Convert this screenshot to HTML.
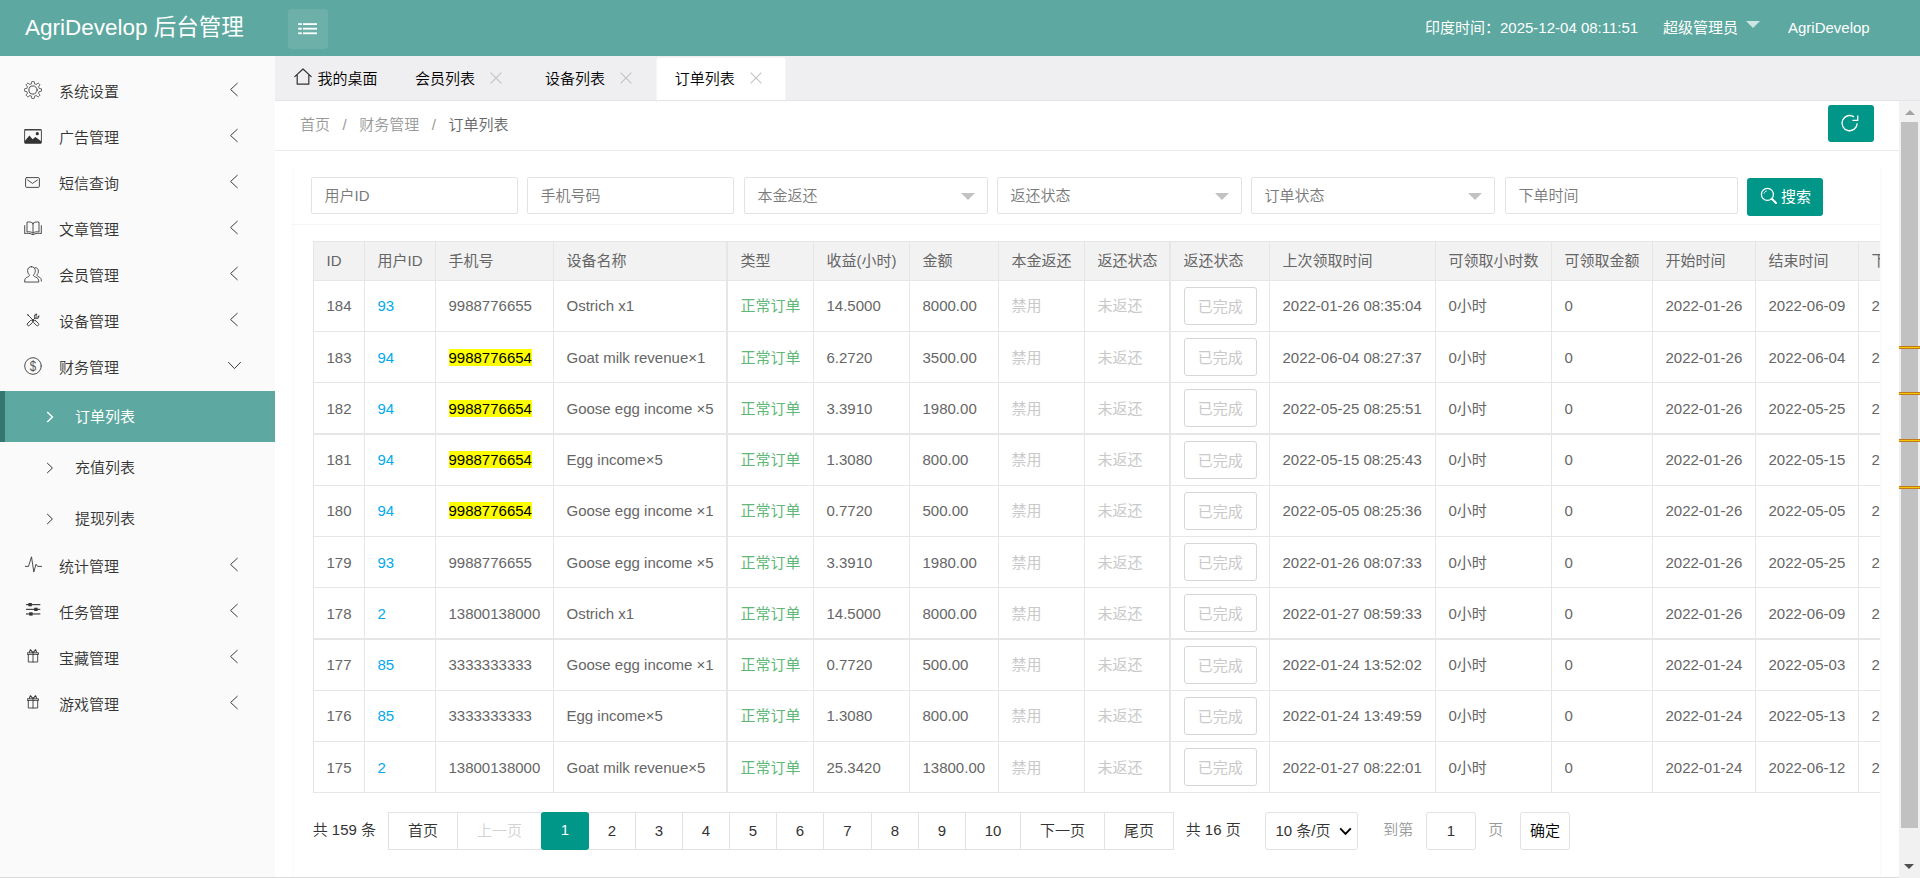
<!DOCTYPE html>
<html lang="zh-CN">
<head>
<meta charset="utf-8">
<title>AgriDevelop 后台管理</title>
<style>
*{box-sizing:border-box;margin:0;padding:0}
html,body{width:1920px;height:878px;overflow:hidden;background:#fff}
body{position:relative;font-family:"Liberation Sans","Noto Sans CJK SC",sans-serif;font-size:15px;color:#333;line-height:1;font-weight:350}
a{text-decoration:none;color:inherit}
ul{list-style:none}
/* ---------- header ---------- */
#hd{font-weight:400;position:absolute;left:0;top:0;width:1920px;height:56px;background:#5da8a0;color:#fff}
#hd .logo{font-weight:400;position:absolute;left:25px;top:0;height:56px;line-height:55px;font-size:22.5px;white-space:nowrap}
#hd .ham{position:absolute;left:288px;top:9px;width:40px;height:40px;border-radius:4px;background:rgba(255,255,255,.1)}
#hd .ham svg{position:absolute;left:0;top:0}
#hd .rt{position:absolute;top:0;height:56px;line-height:55px;font-size:15px;white-space:nowrap}
#hd .tri{position:absolute;left:1746px;top:21px;width:0;height:0;border:7px solid transparent;border-top:7.5px solid rgba(255,255,255,.7);border-bottom:0}
/* ---------- sidebar ---------- */
#sb{position:absolute;left:0;top:56px;width:275px;height:822px;background:#fafafa;padding-top:12px}
#sb .mi{position:relative;height:46px;display:block}
#sb .mi svg{position:absolute}
#sb .mi cite{position:absolute;left:59px;top:0;line-height:48px;font-style:normal;font-size:15px;color:#333;white-space:nowrap}
#sb .mi .ar{position:absolute;left:229px;top:14px}
#sb .sub li{position:relative;height:51px}
#sb .sub li cite{position:absolute;left:75px;top:0;line-height:52px;font-style:normal;font-size:15px;color:#333;white-space:nowrap}
#sb .sub li svg{position:absolute;left:46px;top:20px}
#sb .sub li.on{background:#5da8a0;border-left:5px solid #35776f}
#sb .sub li.on cite{left:70px;color:#fff;font-weight:400}
#sb .sub li.on svg{left:41px}
#sb .sub{padding-top:1px}
#sb .sub li:last-child{height:50px}
/* ---------- tabs ---------- */
#tabs{position:absolute;left:275px;top:56px;width:1645px;height:45px;background:#efeef0;border-bottom:1px solid #e4e4e6;z-index:3}
#tabs li{position:absolute;top:0;height:44px;line-height:46px;font-size:15px;color:#000;white-space:nowrap}
#tabs li.on{background:#fff;top:1px;height:43px;line-height:42px;border:1px solid #f5f5f6;border-bottom:0;border-radius:3px 3px 0 0}
#tabs li.on:after{content:"";position:absolute;left:-1px;right:-1px;bottom:-2px;height:2px;border-left:1px solid #eee;border-right:1px solid #eee}
#tabs svg{position:absolute}
/* ---------- page ---------- */
#pg{position:absolute;left:275px;top:100px;width:1624px;height:778px;background:#fff;overflow:hidden}
#xnav{position:absolute;left:0;top:0;width:1624px;height:51px;border-bottom:1px solid #e9e9e9;line-height:49px;padding-left:25px;font-size:15px;color:#999;white-space:nowrap}
#xnav span{display:inline-block}
#xnav .sep{margin:0 12.5px}
#xnav .cur{color:#666}
#xnav .rf{position:absolute;left:1553px;top:5px;width:46px;height:37px;border-radius:3px;background:#009688}
#card{position:absolute;left:19px;top:67px;width:1586px;height:761px;border-radius:2.5px;box-shadow:0 1px 3px 0 rgba(0,0,0,.06)}
#sf{position:absolute;left:0;top:1px;width:1586px;height:57px;border-bottom:1px solid #f6f6f6}
#sf:before{content:"";position:absolute;left:-3px;bottom:-1px;width:3px;height:1px;background:#f6f6f6}
.inp{position:absolute;top:9px;height:37px;border:1px solid #e3e3e3;border-radius:2px;background:#fff;line-height:35px;padding-left:12.5px;font-size:15px;color:#7a7a7a;white-space:nowrap}
.inp i{position:absolute;right:12px;top:15px;width:0;height:0;border:7.5px solid transparent;border-top-color:#c2c2c2;border-bottom:0}
#sbtn{font-weight:400;position:absolute;left:1453px;top:10px;width:76px;height:38px;border-radius:3px;background:#009688;color:#fff;font-size:15px;line-height:37px;white-space:nowrap}
#sbtn svg{position:absolute;left:13px;top:9.2px}
#sbtn span{position:absolute;left:34px;top:0}
/* ---------- table ---------- */
#tw{position:absolute;left:19px;top:74px;width:1567px;height:560px;overflow:hidden}
table{border-collapse:separate;border-spacing:0;table-layout:fixed;width:1680px;border-top:1px solid #e6e6e6;border-left:1px solid #e6e6e6;font-size:15px;color:#666}
th,td{border-right:1px solid #e6e6e6;border-bottom:1px solid #e6e6e6;padding:0 0 2px 12.5px;text-align:left;font-weight:normal;white-space:nowrap;overflow:hidden;vertical-align:middle}
th{height:39px;background:#f2f2f2}
td{height:51px}
tr.h52 td{height:52px;border-bottom-width:2px}
tr.lo td{padding-bottom:0}
tr.lo .btn{top:0}
th:nth-child(4),td:nth-child(4),th:nth-child(9),td:nth-child(9){border-right-width:2px}
td a{color:#01aaed}
.g{color:#5fb878}
.d{color:#c9c9c9}
mark{background:#ff0;color:#000;display:inline-block;line-height:17px;height:17px}
.btn{position:relative;top:1px;display:inline-block;width:73.5px;height:37.5px;line-height:37.5px;border:1px solid #d6d6d6;border-radius:3px;color:#c9c9c9;text-align:center;vertical-align:middle;background:#fff}
/* ---------- pager ---------- */
#pgr{position:absolute;left:0;top:712px;height:38px;width:1624px;font-size:15px;color:#333;white-space:nowrap}
#pgr>*{position:absolute;top:0;height:38px;line-height:35px;text-align:center}
#pgr .b{border:1px solid #e2e2e2;background:#fff}
#pgr .cur{background:#009688;color:#fff;border-radius:3px}
#pgr .dis{color:#d2d2d2}
#pgr .gr{color:#999}
/* ---------- scrollbar ---------- */
#sc{position:absolute;left:1899px;top:100px;width:21px;height:778px;background:#f1f1f1}
#sc .th{position:absolute;left:2px;top:22px;width:17px;height:706px;background:#c1c1c1}
#sc .up{position:absolute;left:5.5px;top:10px;width:0;height:0;border:5.5px solid transparent;border-bottom:5.5px solid #a3a3a3;border-top:0}
#sc .dn{position:absolute;left:5px;top:764px;width:0;height:0;border:5.5px solid transparent;border-top:5.5px solid #505050;border-bottom:0}
#sc .mk{position:absolute;left:0;width:21px;height:3px;background:#f2c800;border-top:1px solid #c07a1c;border-bottom:1px solid #c07a1c}
#bl{position:absolute;left:0;top:877px;width:1899px;height:1px;background:#d9dbdd}
</style>
</head>
<body>
<div id="hd">
  <div class="logo">AgriDevelop 后台管理</div>
  <div class="ham"><svg width="40" height="40" viewBox="0 0 40 40"><g fill="#fff"><rect x="10.2" y="14.2" width="3.6" height="1.8"/><rect x="15" y="14.2" width="14" height="1.8"/><rect x="10.2" y="18.8" width="3.6" height="1.8"/><rect x="15" y="18.8" width="14" height="1.8"/><rect x="10.2" y="23.4" width="3.6" height="1.8"/><rect x="15" y="23.4" width="14" height="1.8"/></g></svg></div>
  <div class="rt" style="left:1425px">印度时间：2025-12-04 08:11:51</div>
  <div class="rt" style="left:1663px">超级管理员</div>
  <div class="tri"></div>
  <div class="rt" style="left:1788px">AgriDevelop</div>
</div>

<div id="sb">
<ul id="nav">
<li><a class="mi"><svg style="left:24px;top:13px" width="18" height="18" viewBox="0 0 18 18"><path d="M17.65 9.00 L17.64 9.34 L17.62 9.68 L17.59 10.02 L17.05 10.28 L16.31 10.45 L15.56 10.57 L15.02 10.70 L14.94 10.93 L14.86 11.16 L14.77 11.39 L14.68 11.62 L14.57 11.84 L14.45 12.05 L14.75 12.52 L15.19 13.14 L15.60 13.79 L15.79 14.36 L15.58 14.62 L15.35 14.87 L15.12 15.12 L14.87 15.35 L14.62 15.58 L14.36 15.79 L13.79 15.60 L13.14 15.19 L12.52 14.75 L12.05 14.45 L11.84 14.57 L11.62 14.68 L11.39 14.77 L11.16 14.86 L10.93 14.94 L10.70 15.02 L10.57 15.56 L10.45 16.31 L10.28 17.05 L10.02 17.59 L9.68 17.62 L9.34 17.64 L9.00 17.65 L8.66 17.64 L8.32 17.62 L7.98 17.59 L7.72 17.05 L7.55 16.31 L7.43 15.56 L7.30 15.02 L7.07 14.94 L6.84 14.86 L6.61 14.77 L6.38 14.68 L6.16 14.57 L5.95 14.45 L5.48 14.75 L4.86 15.19 L4.21 15.60 L3.64 15.79 L3.38 15.58 L3.13 15.35 L2.88 15.12 L2.65 14.87 L2.42 14.62 L2.21 14.36 L2.40 13.79 L2.81 13.14 L3.25 12.52 L3.55 12.05 L3.43 11.84 L3.32 11.62 L3.23 11.39 L3.14 11.16 L3.06 10.93 L2.98 10.70 L2.44 10.57 L1.69 10.45 L0.95 10.28 L0.41 10.02 L0.38 9.68 L0.36 9.34 L0.35 9.00 L0.36 8.66 L0.38 8.32 L0.41 7.98 L0.95 7.72 L1.69 7.55 L2.44 7.43 L2.98 7.30 L3.06 7.07 L3.14 6.84 L3.23 6.61 L3.32 6.38 L3.43 6.16 L3.55 5.95 L3.25 5.48 L2.81 4.86 L2.40 4.21 L2.21 3.64 L2.42 3.38 L2.65 3.13 L2.88 2.88 L3.13 2.65 L3.38 2.42 L3.64 2.21 L4.21 2.40 L4.86 2.81 L5.48 3.25 L5.95 3.55 L6.16 3.43 L6.38 3.32 L6.61 3.23 L6.84 3.14 L7.07 3.06 L7.30 2.98 L7.43 2.44 L7.55 1.69 L7.72 0.95 L7.98 0.41 L8.32 0.38 L8.66 0.36 L9.00 0.35 L9.34 0.36 L9.68 0.38 L10.02 0.41 L10.28 0.95 L10.45 1.69 L10.57 2.44 L10.70 2.98 L10.93 3.06 L11.16 3.14 L11.39 3.23 L11.62 3.32 L11.84 3.43 L12.05 3.55 L12.52 3.25 L13.14 2.81 L13.79 2.40 L14.36 2.21 L14.62 2.42 L14.87 2.65 L15.12 2.88 L15.35 3.13 L15.58 3.38 L15.79 3.64 L15.60 4.21 L15.19 4.86 L14.75 5.48 L14.45 5.95 L14.57 6.16 L14.68 6.38 L14.77 6.61 L14.86 6.84 L14.94 7.07 L15.02 7.30 L15.56 7.43 L16.31 7.55 L17.05 7.72 L17.59 7.98 L17.62 8.32 L17.64 8.66Z" stroke="#3a3a3a" stroke-width="0.9" fill="none" stroke-linejoin="round" stroke-linecap="round"/><circle cx="9" cy="9" r="4.1" stroke="#3a3a3a" stroke-width="0.9" fill="none" stroke-linejoin="round" stroke-linecap="round"/></svg><cite>系统设置</cite><svg class="ar" width="10" height="15" viewBox="0 0 10 15"><path d="M8.6 1 L1.6 7.5 L8.6 14" stroke="#333" stroke-width="0.95" fill="none"/></svg></a></li>
<li><a class="mi"><svg style="left:24px;top:15px" width="18" height="15" viewBox="0 0 18 15"><rect x="0.6" y="0.7" width="16.8" height="13.6" rx="0.6" stroke="#3a3a3a" stroke-width="0.9" fill="none" stroke-linejoin="round" stroke-linecap="round"/><path d="M0.6 0.8 L17.4 0.8" stroke="#333" stroke-width="1.1"/><path d="M0.8 12 L5.4 6.6 L8.6 10.2 L11.4 8 L17.2 12.2 L17.2 14.3 L0.8 14.3Z" fill="#333"/><circle cx="13.3" cy="4.7" r="1.6" fill="#333"/></svg><cite>广告管理</cite><svg class="ar" width="10" height="15" viewBox="0 0 10 15"><path d="M8.6 1 L1.6 7.5 L8.6 14" stroke="#333" stroke-width="0.95" fill="none"/></svg></a></li>
<li><a class="mi"><svg style="left:25.4px;top:17px" width="15" height="11" viewBox="0 0 15 11"><rect x="0.6" y="0.6" width="13.8" height="9.8" rx="1.2" stroke="#3a3a3a" stroke-width="0.9" fill="none" stroke-linejoin="round" stroke-linecap="round"/><path d="M2.6 3 L7.5 6.4 L12.4 3" stroke="#3a3a3a" stroke-width="0.9" fill="none" stroke-linejoin="round" stroke-linecap="round"/></svg><cite>短信查询</cite><svg class="ar" width="10" height="15" viewBox="0 0 10 15"><path d="M8.6 1 L1.6 7.5 L8.6 14" stroke="#333" stroke-width="0.95" fill="none"/></svg></a></li>
<li><a class="mi"><svg style="left:24.3px;top:15px" width="18" height="15" viewBox="0 0 18 15"><path d="M9 2.4 C7.6 0.9 5 0.7 3 1.2 L3 11 C5 10.5 7.6 10.8 9 12.2 C10.4 10.8 13 10.5 15 11 L15 1.2 C13 0.7 10.4 0.9 9 2.4Z M9 2.4 L9 12.2" stroke="#3a3a3a" stroke-width="0.9" fill="none" stroke-linejoin="round" stroke-linecap="round"/><path d="M0.7 4.6 L0.7 12.6 C3 12 6.6 12.2 9 13.8 C11.4 12.2 15 12 17.3 12.6 L17.3 4.6" stroke="#3a3a3a" stroke-width="0.9" fill="none" stroke-linejoin="round" stroke-linecap="round"/></svg><cite>文章管理</cite><svg class="ar" width="10" height="15" viewBox="0 0 10 15"><path d="M8.6 1 L1.6 7.5 L8.6 14" stroke="#333" stroke-width="0.95" fill="none"/></svg></a></li>
<li><a class="mi"><svg style="left:24px;top:14px" width="18" height="17" viewBox="0 0 18 18" preserveAspectRatio="none"><path d="M7.4 0.7 C9.8 0.7 11.3 2.6 11.3 5 C11.3 7 10.5 8.6 9.4 9.5 C9.4 10.6 10 11 11.6 11.7 C13.6 12.6 14.8 13.6 14.8 17 L0.6 17 C0.6 13.6 1.4 12.6 3.4 11.7 C5 11 5.5 10.6 5.5 9.5 C4.4 8.6 3.6 7 3.6 5 C3.6 2.6 5 0.7 7.4 0.7Z" stroke="#3a3a3a" stroke-width="0.9" fill="none" stroke-linejoin="round" stroke-linecap="round"/><path d="M11.2 1.6 C13.2 1.8 14.4 3.4 14.4 5.4 C14.4 7.2 13.8 8.6 12.9 9.4 C12.9 10.4 13.4 10.8 14.6 11.4 C16.4 12.2 17.4 13.2 17.4 16" stroke="#3a3a3a" stroke-width="0.9" fill="none" stroke-linejoin="round" stroke-linecap="round"/></svg><cite>会员管理</cite><svg class="ar" width="10" height="15" viewBox="0 0 10 15"><path d="M8.6 1 L1.6 7.5 L8.6 14" stroke="#333" stroke-width="0.95" fill="none"/></svg></a></li>
<li><a class="mi"><svg style="left:26px;top:15px" width="14" height="14" viewBox="0 0 14 14"><g transform="rotate(45 7 7)"><rect x="-1" y="6.35" width="1.8" height="1.3" fill="#333"/><path d="M0.6 7 L8 7" stroke="#3a3a3a" stroke-width="0.9" fill="none" stroke-linejoin="round" stroke-linecap="round"/><rect x="8" y="5.6" width="6.6" height="2.8" rx="1.4" stroke="#3a3a3a" stroke-width="0.9" fill="none" stroke-linejoin="round" stroke-linecap="round"/></g><g transform="rotate(-45 7 7)"><rect x="-0.6" y="5.6" width="6.6" height="2.8" rx="1.4" stroke="#3a3a3a" stroke-width="0.9" fill="none" stroke-linejoin="round" stroke-linecap="round"/><path d="M6 7 L9.9 7" stroke="#3a3a3a" stroke-width="0.9" fill="none" stroke-linejoin="round" stroke-linecap="round"/><path d="M14.01 8.42 A2.3 2.3 0 1 1 14.01 5.58 L11.6 6.2 L11.6 7.8 Z" stroke="#3a3a3a" stroke-width="0.9" fill="none" stroke-linejoin="round" stroke-linecap="round"/></g></svg><cite>设备管理</cite><svg class="ar" width="10" height="15" viewBox="0 0 10 15"><path d="M8.6 1 L1.6 7.5 L8.6 14" stroke="#333" stroke-width="0.95" fill="none"/></svg></a></li>
<li><a class="mi"><svg style="left:24px;top:13.4px" width="18" height="18" viewBox="0 0 18 18"><circle cx="9" cy="9" r="8.3" stroke="#3a3a3a" stroke-width="0.9" fill="none" stroke-linejoin="round" stroke-linecap="round"/><text x="9.1" y="13.9" text-anchor="middle" font-family="Liberation Sans,sans-serif" font-size="14" fill="#555" transform="translate(1.55 0) scale(0.83 1)">$</text></svg><cite>财务管理</cite><svg class="ar" style="left:227px;top:16.5px" width="15" height="10" viewBox="0 0 15 10"><path d="M1.2 1 L7.5 7.6 L13.8 1" stroke="#333" stroke-width="0.95" fill="none"/></svg></a>
<ul class="sub"><li class="on"><svg width="8" height="12" viewBox="0 0 8 12"><path d="M1.2 1 L6.4 6 L1.2 11" stroke="#fff" stroke-width="1.5" fill="none"/></svg><cite>订单列表</cite></li><li><svg width="8" height="12" viewBox="0 0 8 12"><path d="M1.2 1 L6.4 6 L1.2 11" stroke="#333" stroke-width="1" fill="none"/></svg><cite>充值列表</cite></li><li><svg width="8" height="12" viewBox="0 0 8 12"><path d="M1.2 1 L6.4 6 L1.2 11" stroke="#333" stroke-width="1" fill="none"/></svg><cite>提现列表</cite></li></ul></li>
<li><a class="mi"><svg style="left:24.5px;top:12.5px" width="17" height="17" viewBox="0 0 17 17"><path d="M0.3 10.4 L3.5 10.4 L6.5 0.8 L8.8 16 L11 8.2 L12.6 10.4 L16.6 10.4" stroke="#3a3a3a" stroke-width="0.9" fill="none" stroke-linejoin="round" stroke-linecap="round"/></svg><cite>统计管理</cite><svg class="ar" width="10" height="15" viewBox="0 0 10 15"><path d="M8.6 1 L1.6 7.5 L8.6 14" stroke="#333" stroke-width="0.95" fill="none"/></svg></a></li>
<li><a class="mi"><svg style="left:25.8px;top:14px" width="15" height="14" viewBox="0 0 15 14"><g fill="#333"><rect x="0" y="1.1" width="14.3" height="1.1"/><rect x="2.4" y="0" width="3.4" height="3.3"/><rect x="0" y="5.8" width="14.3" height="1.1"/><rect x="8.2" y="4.7" width="3.4" height="3.3"/><rect x="0" y="10.4" width="14.3" height="1.1"/><rect x="3.2" y="9.3" width="3.4" height="3.3"/></g></svg><cite>任务管理</cite><svg class="ar" width="10" height="15" viewBox="0 0 10 15"><path d="M8.6 1 L1.6 7.5 L8.6 14" stroke="#333" stroke-width="0.95" fill="none"/></svg></a></li>
<li><a class="mi"><svg style="left:26.8px;top:13.6px" width="12" height="14" viewBox="0 0 12 14"><path d="M1.3 5.4 L1.3 13 L10.7 13 L10.7 5.4 M0.5 3.8 L11.5 3.8 L11.5 5.4 L0.5 5.4Z M6 3.8 L6 13" stroke="#3a3a3a" stroke-width="0.9" fill="none" stroke-linejoin="round" stroke-linecap="round"/><path d="M6 3.6 L3.4 0.7 L2.2 3.6 M6 3.6 L8.6 0.7 L9.8 3.6" stroke="#333" stroke-width="1.05" fill="none" stroke-linejoin="round"/></svg><cite>宝藏管理</cite><svg class="ar" width="10" height="15" viewBox="0 0 10 15"><path d="M8.6 1 L1.6 7.5 L8.6 14" stroke="#333" stroke-width="0.95" fill="none"/></svg></a></li>
<li><a class="mi"><svg style="left:26.8px;top:13.6px" width="12" height="14" viewBox="0 0 12 14"><path d="M1.3 5.4 L1.3 13 L10.7 13 L10.7 5.4 M0.5 3.8 L11.5 3.8 L11.5 5.4 L0.5 5.4Z M6 3.8 L6 13" stroke="#3a3a3a" stroke-width="0.9" fill="none" stroke-linejoin="round" stroke-linecap="round"/><path d="M6 3.6 L3.4 0.7 L2.2 3.6 M6 3.6 L8.6 0.7 L9.8 3.6" stroke="#333" stroke-width="1.05" fill="none" stroke-linejoin="round"/></svg><cite>游戏管理</cite><svg class="ar" width="10" height="15" viewBox="0 0 10 15"><path d="M8.6 1 L1.6 7.5 L8.6 14" stroke="#333" stroke-width="0.95" fill="none"/></svg></a></li>
</ul>
</div>

<ul id="tabs">
<li style="left:0;width:121px;padding-left:42.5px"><svg style="left:19px;top:12px" width="18" height="18" viewBox="0 0 18 18"><path d="M0.8 8.6 L9 1 L17.2 8.6 M3.2 7 L3.2 16.2 L14.8 16.2 L14.8 7" stroke="#333" stroke-width="1.2" fill="none" stroke-linejoin="round" stroke-linecap="round"/></svg>我的桌面</li>
<li style="left:121.25px;width:130px;padding-left:18.75px">会员列表<svg style="left:94px;top:16px" width="12" height="12" viewBox="0 0 12 12"><path d="M0.6 0.6 L11.4 11.4 M11.4 0.6 L0.6 11.4" stroke="#c2c2c2" stroke-width="1.1" fill="none"/></svg></li>
<li style="left:251.25px;width:130px;padding-left:18.75px">设备列表<svg style="left:94px;top:16px" width="12" height="12" viewBox="0 0 12 12"><path d="M0.6 0.6 L11.4 11.4 M11.4 0.6 L0.6 11.4" stroke="#c2c2c2" stroke-width="1.1" fill="none"/></svg></li>
<li class="on" style="left:381px;width:130px;padding-left:17.75px">订单列表<svg style="left:93px;top:14px" width="12" height="12" viewBox="0 0 12 12"><path d="M0.6 0.6 L11.4 11.4 M11.4 0.6 L0.6 11.4" stroke="#c2c2c2" stroke-width="1.1" fill="none"/></svg></li>
</ul>

<div id="pg">
  <div id="xnav"><span>首页</span><span class="sep">/</span><span>财务管理</span><span class="sep">/</span><span class="cur">订单列表</span>
    <a class="rf"><svg width="46" height="37" viewBox="0 0 46 37"><path d="M29.2 18.4 A7.6 7.6 0 1 1 26 11.9" stroke="#fff" stroke-width="1.35" fill="none"/><path d="M29.7 10.6 L29.7 15.4 L24.4 15.4" stroke="#fff" stroke-width="1.35" fill="none"/></svg></a>
  </div>
  <div id="card">
    <div id="sf">
<div class="inp" style="left:17px;width:206.5px">用户ID</div>
<div class="inp" style="left:233px;width:206.5px">手机号码</div>
<div class="inp" style="left:450px;width:243.5px">本金返还<i></i></div>
<div class="inp" style="left:703px;width:244.5px">返还状态<i></i></div>
<div class="inp" style="left:957px;width:243.5px">订单状态<i></i></div>
<div class="inp" style="left:1211px;width:232.5px">下单时间</div>
<a id="sbtn"><svg width="18" height="18" viewBox="0 0 18 18"><circle cx="7.4" cy="7.4" r="6" stroke="#fff" stroke-width="1.3" fill="none"/><path d="M11.8 11.8 L16 16" stroke="#fff" stroke-width="2" stroke-linecap="round"/><path d="M4 6.6 C4.4 5 5.4 4.2 6.8 4" stroke="#fff" stroke-width="0.9" fill="none"/></svg><span>搜索</span></a>
</div>
<div id="tw">
<table style="width:1712px"><colgroup><col style="width:51px"><col style="width:71px"><col style="width:118px"><col style="width:174px"><col style="width:86px"><col style="width:96px"><col style="width:89px"><col style="width:86px"><col style="width:86px"><col style="width:99px"><col style="width:166px"><col style="width:116px"><col style="width:101px"><col style="width:103px"><col style="width:103px"><col style="width:166px"></colgroup>
<thead><tr><th>ID</th><th>用户ID</th><th>手机号</th><th>设备名称</th><th>类型</th><th>收益(小时)</th><th>金额</th><th>本金返还</th><th>返还状态</th><th>返还状态</th><th>上次领取时间</th><th>可领取小时数</th><th>可领取金额</th><th>开始时间</th><th>结束时间</th><th>下单时间</th></tr></thead>
<tbody>
<tr><td>184</td><td><a>93</a></td><td>9988776655</td><td>Ostrich x1</td><td class="g">正常订单</td><td>14.5000</td><td>8000.00</td><td class="d">禁用</td><td class="d">未返还</td><td><span class="btn">已完成</span></td><td>2022-01-26 08:35:04</td><td>0小时</td><td>0</td><td>2022-01-26</td><td>2022-06-09</td><td>2022-01-26 08:35:04</td></tr>
<tr class="lo"><td>183</td><td><a>94</a></td><td><mark>9988776654</mark></td><td>Goat milk revenue×1</td><td class="g">正常订单</td><td>6.2720</td><td>3500.00</td><td class="d">禁用</td><td class="d">未返还</td><td><span class="btn">已完成</span></td><td>2022-06-04 08:27:37</td><td>0小时</td><td>0</td><td>2022-01-26</td><td>2022-06-04</td><td>2022-01-26 08:27:37</td></tr>
<tr class="h52 lo"><td>182</td><td><a>94</a></td><td><mark>9988776654</mark></td><td>Goose egg income ×5</td><td class="g">正常订单</td><td>3.3910</td><td>1980.00</td><td class="d">禁用</td><td class="d">未返还</td><td><span class="btn">已完成</span></td><td>2022-05-25 08:25:51</td><td>0小时</td><td>0</td><td>2022-01-26</td><td>2022-05-25</td><td>2022-01-26 08:25:51</td></tr>
<tr><td>181</td><td><a>94</a></td><td><mark>9988776654</mark></td><td>Egg income×5</td><td class="g">正常订单</td><td>1.3080</td><td>800.00</td><td class="d">禁用</td><td class="d">未返还</td><td><span class="btn">已完成</span></td><td>2022-05-15 08:25:43</td><td>0小时</td><td>0</td><td>2022-01-26</td><td>2022-05-15</td><td>2022-01-26 08:25:43</td></tr>
<tr><td>180</td><td><a>94</a></td><td><mark>9988776654</mark></td><td>Goose egg income ×1</td><td class="g">正常订单</td><td>0.7720</td><td>500.00</td><td class="d">禁用</td><td class="d">未返还</td><td><span class="btn">已完成</span></td><td>2022-05-05 08:25:36</td><td>0小时</td><td>0</td><td>2022-01-26</td><td>2022-05-05</td><td>2022-01-26 08:25:36</td></tr>
<tr class="lo"><td>179</td><td><a>93</a></td><td>9988776655</td><td>Goose egg income ×5</td><td class="g">正常订单</td><td>3.3910</td><td>1980.00</td><td class="d">禁用</td><td class="d">未返还</td><td><span class="btn">已完成</span></td><td>2022-01-26 08:07:33</td><td>0小时</td><td>0</td><td>2022-01-26</td><td>2022-05-25</td><td>2022-01-26 08:07:33</td></tr>
<tr class="h52 lo"><td>178</td><td><a>2</a></td><td>13800138000</td><td>Ostrich x1</td><td class="g">正常订单</td><td>14.5000</td><td>8000.00</td><td class="d">禁用</td><td class="d">未返还</td><td><span class="btn">已完成</span></td><td>2022-01-27 08:59:33</td><td>0小时</td><td>0</td><td>2022-01-26</td><td>2022-06-09</td><td>2022-01-26 08:59:33</td></tr>
<tr><td>177</td><td><a>85</a></td><td>3333333333</td><td>Goose egg income ×1</td><td class="g">正常订单</td><td>0.7720</td><td>500.00</td><td class="d">禁用</td><td class="d">未返还</td><td><span class="btn">已完成</span></td><td>2022-01-24 13:52:02</td><td>0小时</td><td>0</td><td>2022-01-24</td><td>2022-05-03</td><td>2022-01-24 13:52:02</td></tr>
<tr><td>176</td><td><a>85</a></td><td>3333333333</td><td>Egg income×5</td><td class="g">正常订单</td><td>1.3080</td><td>800.00</td><td class="d">禁用</td><td class="d">未返还</td><td><span class="btn">已完成</span></td><td>2022-01-24 13:49:59</td><td>0小时</td><td>0</td><td>2022-01-24</td><td>2022-05-13</td><td>2022-01-24 13:49:59</td></tr>
<tr class="lo"><td>175</td><td><a>2</a></td><td>13800138000</td><td>Goat milk revenue×5</td><td class="g">正常订单</td><td>25.3420</td><td>13800.00</td><td class="d">禁用</td><td class="d">未返还</td><td><span class="btn">已完成</span></td><td>2022-01-27 08:22:01</td><td>0小时</td><td>0</td><td>2022-01-24</td><td>2022-06-12</td><td>2022-01-24 08:22:01</td></tr>
</tbody></table>
</div>
  </div>
  <div id="pgr"><span style="left:37.7px">共 159 条</span><a class="b" style="left:113px;width:70px">首页</a><a class="b dis" style="left:182px;width:85px">上一页</a><a class="b" style="left:313px;width:48px">2</a><a class="b" style="left:360px;width:48px">3</a><a class="b" style="left:407px;width:48px">4</a><a class="b" style="left:454px;width:48px">5</a><a class="b" style="left:501px;width:48px">6</a><a class="b" style="left:548px;width:49px">7</a><a class="b" style="left:596px;width:48px">8</a><a class="b" style="left:643px;width:48px">9</a><a class="b" style="left:690px;width:56px">10</a><a class="b" style="left:745px;width:85px">下一页</a><a class="b" style="left:829px;width:70px">尾页</a><span class="cur" style="left:266px;width:48px">1</span><span style="left:910.7px">共 16 页</span><span class="b sel" style="left:989.7px;width:93px;border-radius:3px;text-align:left;padding-left:9.8px">10 条/页<svg style="position:absolute;left:73.5px;top:14px" width="13" height="9" viewBox="0 0 13 9"><path d="M1.2 1.4 L6.5 6.8 L11.8 1.4" stroke="#000" stroke-width="1.9" fill="none"/></svg></span><span class="gr" style="left:1108.3px">到第</span><span class="b" style="left:1151.3px;width:49.4px;border-radius:3px">1</span><span class="gr" style="left:1213.3px">页</span><span class="b" style="left:1245.3px;width:49.4px;border-radius:3px;color:#000">确定</span></div>
</div>

<div id="sc"><div class="up"></div><div class="th"></div><div class="dn"></div>
  <div class="mk" style="top:246px"></div><div class="mk" style="top:292px"></div><div class="mk" style="top:339px"></div><div class="mk" style="top:386px"></div>
</div>
<div id="bl"></div>
</body>
</html>
